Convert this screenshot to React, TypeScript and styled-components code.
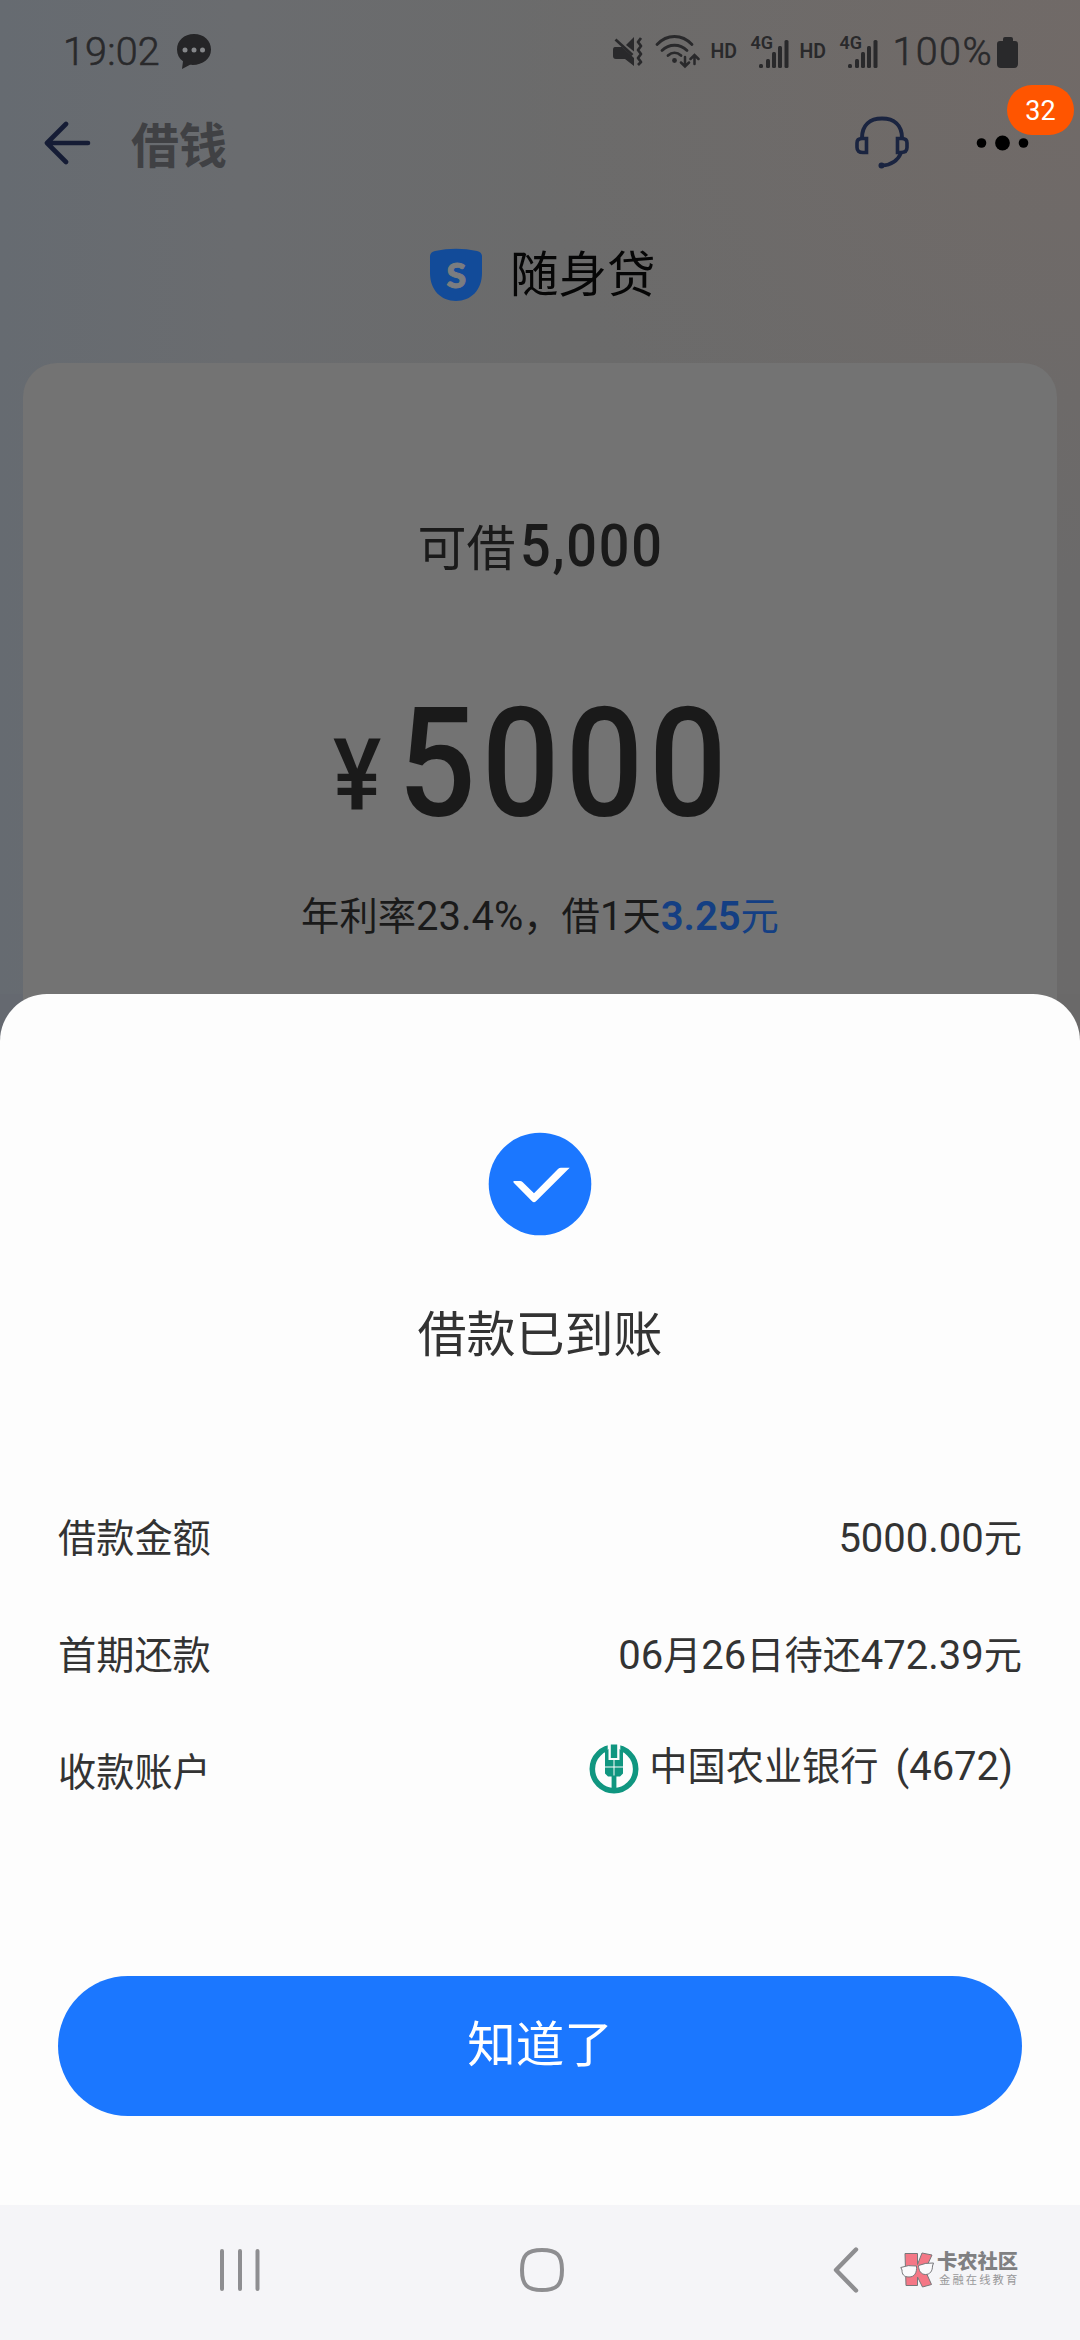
import React from "react";
import styled, { createGlobalStyle } from "styled-components";

const Global = createGlobalStyle`
  * { box-sizing: border-box; }
  html, body { margin: 0; padding: 0; }
  body { width: 1080px; height: 2340px; overflow: hidden; background: #fdfdfe; }
  svg { display: block; flex: none; }
`;

const cjk = `"Noto Sans CJK SC", "Noto Sans", sans-serif`;
const latin = `Roboto, "Noto Sans CJK SC", sans-serif`;

const Screen = styled.div`
  width: 1080px;
  height: 2340px;
  display: flex;
  flex-direction: column;
  overflow: hidden;
  font-family: ${cjk};
  background:
    radial-gradient(560px 520px at 1080px 60px, rgba(120, 106, 100, 0.45), rgba(112, 106, 104, 0) 100%),
    linear-gradient(90deg, #666b71 0, #6a6c6f 240px, #6b6b6b 560px, #6b6a6a 1080px);
`;

const StatusBar = styled.div`
  height: 90px;
  padding: 14px 62px 0 63px;
  display: flex;
  align-items: center;
  justify-content: space-between;
  color: #29292b;
  font-family: ${latin};
`;

const Cluster = styled.div<{ $gap?: number }>`
  display: flex;
  align-items: center;
  gap: ${(p) => p.$gap ?? 0}px;
`;

const Clock = styled.span<{ $spacing: number }>`
  font-size: 39.5px;
  line-height: 46px;
  font-weight: 300;
  -webkit-text-stroke: 0.6px currentColor;
  letter-spacing: ${(p) => p.$spacing}px;
`;

const HdLabel = styled.span`
  width: 26px;
  margin-left: -4px;
  font-size: 19.5px;
  line-height: 24px;
  font-weight: 600;
`;

const Network = styled.div`
  width: 39px;
  height: 34px;
  display: flex;
  align-items: flex-start;
`;

const NetLabel = styled.span`
  width: 22px;
  margin-right: -14px;
  font-size: 18px;
  line-height: 16px;
  font-weight: 600;
`;

const Header = styled.header`
  height: 106px;
  padding: 0 51px 0 44px;
  display: flex;
  align-items: center;
`;

const HeaderTitle = styled.h1`
  margin: 0 0 3px 40px;
  flex: 1;
  font-size: 48px;
  line-height: 60px;
  font-weight: 700;
  color: #404144;
`;

const MoreButton = styled.div`
  position: relative;
  margin-left: 67px;
`;

const Badge = styled.span`
  position: absolute;
  left: 31px;
  top: -50px;
  width: 67px;
  height: 50px;
  border-radius: 25px;
  display: flex;
  align-items: center;
  justify-content: center;
  padding-top: 2px;
  background: #ff5500;
  color: #fff;
  font: 400 27px/30px ${latin};
`;

const Brand = styled.div`
  height: 167px;
  padding: 0 0 9px 429px;
  display: flex;
  align-items: center;
  gap: 27px;
  font-size: 48.5px;
  line-height: 60px;
  color: #060606;
`;

const BrandName = styled.span`
  margin-bottom: 8px;
`;

const BrandLogo = styled.div`
  display: grid;
  place-items: center;
  & > * { grid-area: 1 / 1; }
`;

const BrandLetter = styled.span`
  font: 900 34px/36px Lato, sans-serif;
  color: #7b7d80;
  -webkit-text-stroke: 1px currentColor;
  transform: scaleX(1.05);
`;

const LoanCard = styled.section`
  margin: 0 23px;
  height: 631px;
  padding-top: 146px;
  border-radius: 34px 34px 0 0;
  display: flex;
  flex-direction: column;
  align-items: center;
  background: #737373;
  color: #1a1a1a;
`;

const Limit = styled.div`
  height: 72px;
  width: 245px;
  display: flex;
  align-items: baseline;
  gap: 4px;
  font-size: 49px;
  line-height: 72px;
  white-space: nowrap;
`;

const Din = styled.span<{ $size: number; $spacing: number; $raise?: number }>`
  font-family: ${latin};
  font-size: ${(p) => p.$size}px;
  line-height: 1;
  font-weight: 500;
  letter-spacing: ${(p) => p.$spacing}px;
  transform: translateY(${(p) => -(p.$raise ?? 0)}px) scaleX(0.9);
  transform-origin: left;
  white-space: nowrap;
`;

const Amount = styled.div`
  width: 415px;
  height: 150px;
  margin-top: 107px;
  display: flex;
  align-items: baseline;
  gap: 12px;
`;

const Rate = styled.div`
  margin-top: 46px;
  font-size: 38.3px;
  line-height: 60px;
  white-space: nowrap;
`;

const Num = styled.span`
  font-family: ${latin};
  font-size: 40px;
`;

const Fee = styled.span`
  color: #143f83;
  ${Num} { font-weight: 600; }
`;

const SheetBack = styled.div`
  flex: 1;
  display: flex;
  flex-direction: column;
  background: linear-gradient(90deg, #656970 23px, #737373 23px, #737373 1057px, #6a6969 1057px);
`;

const Sheet = styled.section`
  height: 1211px;
  padding: 138px 58px 0;
  border-radius: 47px 47px 0 0;
  display: flex;
  flex-direction: column;
  align-items: center;
  background: #fdfdfd;
  color: #333;
`;

const SheetTitle = styled.h2`
  margin: 60px 0 0;
  font-size: 49px;
  line-height: 70px;
  font-weight: 400;
`;

const Rows = styled.dl`
  width: 100%;
  margin: 111px 0 0;
`;

const Row = styled.div`
  height: 117px;
  display: flex;
  align-items: center;
  justify-content: space-between;
  font-size: 38.2px;
  line-height: 60px;
`;

const Term = styled.dt``;

const Value = styled.dd`
  margin: 0;
  padding-top: 3px;
  white-space: nowrap;
`;

const BankValue = styled(Value)`
  display: flex;
  align-items: center;
  gap: 10px;
  padding: 0 9px 8px 0;
  & > svg { margin-top: 6px; }
`;

const CardTail = styled(Num)`
  margin-left: 17px;
`;

const Confirm = styled.button`
  width: 100%;
  height: 140px;
  margin-top: 148px;
  padding: 0 0 11px;
  border: 0;
  border-radius: 70px;
  background: #1b77ff;
  color: #fff;
  font: 400 48.5px/70px ${cjk};
`;

const NavBar = styled.nav`
  height: 135px;
  padding: 0 50px 5px 220px;
  display: flex;
  align-items: center;
  background: #f5f5f8;
`;

const NavGap = styled.span<{ $w: number }>`
  width: ${(p) => p.$w}px;
  flex: none;
`;

const Watermark = styled.div`
  display: flex;
  align-items: center;
  gap: 3px;
`;

const WatermarkText = styled.div`
  display: flex;
  flex-direction: column;
  gap: 1px;
  margin-top: -2px;
  white-space: nowrap;
`;

const MarkName = styled.span`
  font-size: 20.3px;
  line-height: 20px;
  font-weight: 900;
  color: #808082;
`;

const MarkTag = styled.span`
  padding-left: 2px;
  font-size: 11.3px;
  line-height: 17px;
  letter-spacing: 2.1px;
  color: #98989a;
`;

const ChatIcon = () => (
  <svg width="36" height="36" viewBox="0 0 36 36">
    <path d="M18 0C8 0 1 6.700 1 15.500c0 5 2 9 6 11.700L6 35l8-4.200c11 1.200 21-5 21-15.300C35 6.700 28 0 18 0Z" fill="#252527" />
    <g fill="#85878a"><circle cx="9" cy="16" r="2.500" /><circle cx="18" cy="16" r="2.500" /><circle cx="26.500" cy="16" r="2.500" /></g>
  </svg>
);

const MuteIcon = () => (
  <svg width="30" height="30" viewBox="0 0 30 30" fill="none" stroke="#29292b">
    <path d="M2 10h7l12 11v8l-9-7H3q-3 0-3-3v-6q0-3 2-3Z" fill="#29292b" stroke="none" />
    <path d="M13 8 21 0v14.500Z" fill="#29292b" stroke="none" />
    <path d="m2.500 2.500 17 15.500" strokeWidth="2.700" />
    <path d="m28 1-3 4 3 4-3 4 3 4-3 4 3 4-3 3" strokeWidth="2.700" strokeLinejoin="round" />
  </svg>
);

const WifiIcon = () => (
  <svg width="45" height="34" viewBox="0 0 45 34" fill="none" stroke="#29292b" strokeWidth="2.800" strokeLinecap="round">
    <path d="M2 9.500C12-1.200 27-1.200 37 9.500M7 15.500c7-7 18-7 25 0M13 20.500c4-3.500 9-3.500 13 0" />
    <circle cx="19.500" cy="25.500" r="2.400" fill="#29292b" stroke="none" />
    <path d="M30 22v9m-4-3.500 4 4 4-4M39.500 29v-8.500m-4 3.500 4-4 4 4" strokeWidth="2.500" />
  </svg>
);

const SignalIcon = () => (
  <svg width="31" height="34" viewBox="0 0 31 34" fill="#29292b">
    <rect x="1" y="29" width="4" height="4" rx="1.500" />
    <rect x="8" y="24" width="4" height="9" rx="1.500" />
    <rect x="14" y="17" width="4" height="16" rx="1.500" />
    <rect x="20" y="11" width="4" height="22" rx="1.500" />
    <rect x="26.500" y="5" width="4" height="28" rx="1.500" />
  </svg>
);

const BatteryIcon = () => (
  <svg width="21" height="31" viewBox="0 0 21 31" fill="#29292b">
    <path d="M6 2q0-2 2-2h6q2 0 2 2v2h2q3 0 3 3v20q0 4-4 4H4q-4 0-4-4V7q0-3 3-3h3Z" />
  </svg>
);

const BackArrow = () => (
  <svg width="47" height="44" viewBox="0 0 47 44" fill="none" stroke="#151c35" strokeWidth="4.600" strokeLinecap="round" strokeLinejoin="round">
    <path d="M22 3 3 22l19 19M4 22h40" />
  </svg>
);

const HeadsetIcon = () => (
  <svg width="54" height="54" viewBox="0 0 54 54" fill="none" stroke="#1a2440" strokeWidth="4">
    <path d="M7 22C7 9 15 2.500 27 2.500S47 9 47 22" />
    <path d="M11.500 22.500v14H8q-6 0-6-5V27q0-4.500 5-4.500ZM42.500 22.500v14H46q6 0 6-5V27q0-4.500-5-4.500Z" strokeWidth="3.600" />
    <path d="M46 37c-3 7-9 12-19 12.500" strokeWidth="3.600" />
    <circle cx="26.500" cy="49.500" r="3" fill="#1a2440" stroke="none" />
  </svg>
);

const DotsIcon = () => (
  <svg width="53" height="16" viewBox="0 0 53 16" fill="#000">
    <circle cx="5.500" cy="8" r="4.800" /><circle cx="26.500" cy="8" r="7.400" /><circle cx="47.500" cy="8" r="4.800" />
  </svg>
);

const Shield = () => (
  <svg width="54" height="54" viewBox="0 0 54 54">
    <path d="M6 3Q27-1.500 48 3q5 1 5 5.500V25C53 42 42 53 27 53S1 42 1 25V8.500Q1 4 6 3Z" fill="#124b99" />
  </svg>
);

const SuccessIcon = () => (
  <svg width="104" height="104" viewBox="0 0 104 104">
    <circle cx="52" cy="52" r="51.300" fill="#1b77ff" />
    <path d="M25.500 49h6.500q1.500 0 2.500 1L46 61.200 70 37q1.200-1.200 3-1.200h8.700L48 69.200q-2 2-4 0L25.500 50.500Z" fill="#fff" />
  </svg>
);

const BankLogo = () => (
  <svg width="50" height="50" viewBox="0 0 50 50">
    <circle cx="25" cy="25" r="21.700" fill="none" stroke="#109680" strokeWidth="5.600" />
    <path d="M18.700 0h12.600v9H18.700Z" fill="#fdfdfd" />
    <g fill="#109680">
      <path d="M21.800.500h6.400v13.500h-6.400Z" />
      <path d="M16 7.500l3.500-2.500v11H24.500v6.500H16ZM34 7.500 30.500 5v11H25.500v6.500H34Z" />
      <path d="M16 23.500h8.500v9H19l-3-3ZM25.500 23.500H34v6l-3 3h-5.500Z" />
      <path d="M22.600 31.500h4.800v15h-4.800Z" />
    </g>
  </svg>
);

const RecentsIcon = () => (
  <svg width="40" height="44" viewBox="0 0 40 44" stroke="#8e8e91" strokeWidth="4" strokeLinecap="round">
    <path d="M2 3v38M20 3v38M37.500 3v38" />
  </svg>
);

const HomeIcon = () => (
  <svg width="44" height="44" viewBox="0 0 44 44" fill="none" stroke="#8e8e91" strokeWidth="4">
    <path d="M22 2c15 0 20 5 20 20s-5 20-20 20S2 37 2 22 7 2 22 2Z" />
  </svg>
);

const BackIcon = () => (
  <svg width="26" height="46" viewBox="0 0 26 46" fill="none" stroke="#8e8e91" strokeWidth="4.400" strokeLinecap="round" strokeLinejoin="round">
    <path d="M23 2.500 3 23l20 20.500" />
  </svg>
);

const MarkLogo = () => (
  <svg width="34" height="36" viewBox="0 0 34 36" stroke="#77777a" strokeWidth="1" strokeLinejoin="round">
    <path d="M5 1.500h12.500v11L22 1l10 2-7 15 6.500 14.500-9 2.500-5-10v8.500H6Z" fill="#f47786" />
    <path d="M.800 15.500Q8 12.500 16.500 14c.500 7-2 11-7.500 11S2 22 2 18ZM18.500 13.500q7-3 15-2.500l-1 3c0 5-2.500 8.500-7 8.500s-7-4-7-9Z" fill="#fafafc" />
  </svg>
);

const SimSignal = () => (
  <Network><NetLabel>4G</NetLabel><SignalIcon /></Network>
);

const BASIC_ROWS = [
  { label: "借款金额", parts: ["5000.00", "元"] },
  { label: "首期还款", parts: ["06", "月", "26", "日待还", "472.39", "元"] },
];

export default function App() {
  return (
    <>
      <Global />
      <Screen>
        <StatusBar>
          <Cluster $gap={16}>
            <Clock $spacing={0.2}>19:02</Clock>
            <ChatIcon />
          </Cluster>
          <Cluster $gap={14}>
            <Cluster $gap={12}>
              <MuteIcon />
              <WifiIcon />
            </Cluster>
            <HdLabel>HD</HdLabel>
            <SimSignal />
            <HdLabel>HD</HdLabel>
            <SimSignal />
            <Cluster $gap={4}>
              <Clock $spacing={1.4}>100%</Clock>
              <BatteryIcon />
            </Cluster>
          </Cluster>
        </StatusBar>
        <Header>
          <BackArrow />
          <HeaderTitle>借钱</HeaderTitle>
          <HeadsetIcon />
          <MoreButton>
            <DotsIcon />
            <Badge>32</Badge>
          </MoreButton>
        </Header>
        <Brand>
          <BrandLogo>
            <Shield />
            <BrandLetter>S</BrandLetter>
          </BrandLogo>
          <BrandName>随身贷</BrandName>
        </Brand>
        <LoanCard>
          <Limit>
            <span>可借</span>
            <Din $size={60} $spacing={2}>5,000</Din>
          </Limit>
          <Amount>
            <Din $size={101} $spacing={0} $raise={6}>¥</Din>
            <Din $size={152} $spacing={6.6}>5000</Din>
          </Amount>
          <Rate>
            年利率<Num>23.4%</Num>，借<Num>1</Num>天<Fee><Num>3.25</Num>元</Fee>
          </Rate>
        </LoanCard>
        <SheetBack>
          <Sheet>
            <SuccessIcon />
            <SheetTitle>借款已到账</SheetTitle>
            <Rows>
              {BASIC_ROWS.map((row) => (
                <Row key={row.label}>
                  <Term>{row.label}</Term>
                  <Value>
                    {row.parts.map((part, i) =>
                      /^\d/.test(part) ? <Num key={i}>{part}</Num> : part
                    )}
                  </Value>
                </Row>
              ))}
              <Row>
                <Term>收款账户</Term>
                <BankValue>
                  <BankLogo />
                  <span>中国农业银行<CardTail>(4672)</CardTail></span>
                </BankValue>
              </Row>
            </Rows>
            <Confirm>知道了</Confirm>
          </Sheet>
          <NavBar>
            <RecentsIcon />
            <NavGap $w={260} />
            <HomeIcon />
            <NavGap $w={269} />
            <BackIcon />
            <NavGap $w={41} />
            <Watermark>
              <MarkLogo />
              <WatermarkText>
                <MarkName>卡农社区</MarkName>
                <MarkTag>金融在线教育</MarkTag>
              </WatermarkText>
            </Watermark>
          </NavBar>
        </SheetBack>
      </Screen>
    </>
  );
}
